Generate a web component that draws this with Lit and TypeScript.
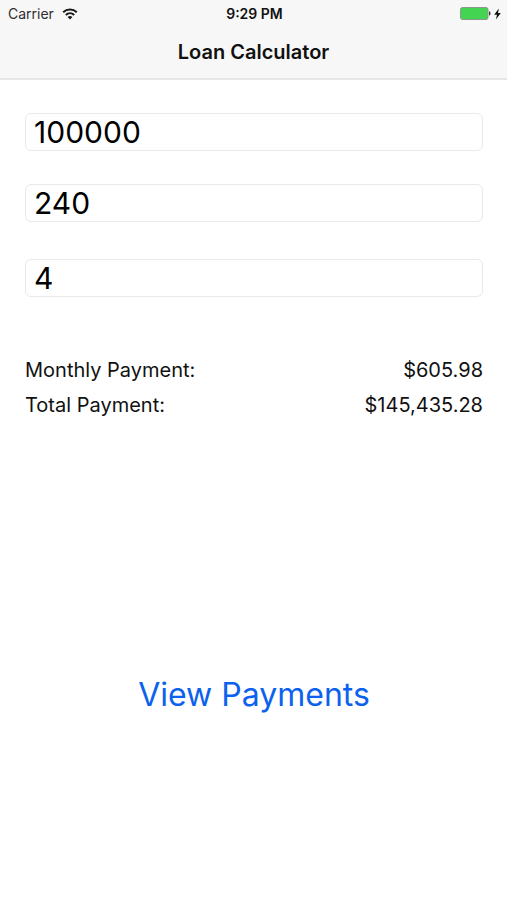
import { LitElement, html, css } from "lit";
import { customElement, state } from "lit/decorators.js";

const money = new Intl.NumberFormat("en-US", { style: "currency", currency: "USD" });

@customElement("status-bar")
class StatusBar extends LitElement {
  static styles = css`
    :host {
      display: grid;
      grid-template-columns: 1fr auto 1fr;
      align-items: center;
      height: 27px;
      padding: 0 6px 0 8px;
      font-size: 14px;
      color: #2e2e2e;
    }
    .side {
      display: flex;
      align-items: center;
      gap: 8px;
    }
    .power {
      justify-content: flex-end;
      gap: 3px;
    }
    .time {
      font-weight: 600;
      color: #111;
    }
    svg {
      display: block;
    }
  `;

  render() {
    return html`
      <div class="side">
        <span>Carrier</span>
        <svg width="16" height="12" viewBox="0 0 16 12" fill="none" stroke="#1a1a1a" stroke-width="2" aria-label="Wi-Fi">
          <path d="M1.2 4.2C5 .6 11 .6 14.8 4.2" />
          <path d="M3.8 7C6.2 4.7 9.8 4.7 12.2 7" />
          <path d="M8 11.4 5.6 9C7 7.7 9 7.7 10.4 9Z" fill="#1a1a1a" stroke="none" />
        </svg>
      </div>
      <span class="time">9:29 PM</span>
      <div class="side power">
        <svg width="31" height="13" viewBox="0 0 31 13" aria-label="Battery full">
          <rect x=".5" y=".5" width="27.5" height="12" rx="2" fill="#43d551" stroke="#8a978b" />
          <path d="M29 4.3C31 4.8 31 8.2 29 8.7Z" fill="#333" />
        </svg>
        <svg width="7" height="12" viewBox="0 0 7 12" aria-label="Charging">
          <path d="M4.8.5.2 6.7H3L1.9 11.5 6.8 5H4Z" fill="#111" />
        </svg>
      </div>
    `;
  }
}

@customElement("app-root")
class AppRoot extends LitElement {
  static styles = css`
    :host {
      display: flex;
      flex-direction: column;
      min-height: 100vh;
      background: #fff;
      color: #111;
      font-family: Inter, "Liberation Sans", sans-serif;
    }
    * {
      box-sizing: border-box;
    }
    header {
      background: #f7f7f7;
      border-bottom: 2px solid #e6e6e6;
    }
    h1 {
      margin: 0;
      padding: 11px 0 12px;
      font-size: 20px;
      line-height: 28px;
      font-weight: 600;
      text-align: center;
    }
    main {
      display: flex;
      flex-direction: column;
      padding: 33px 24px 0 25px;
    }
    form {
      display: grid;
      gap: 33px;
    }
    input {
      display: block;
      width: 100%;
      height: 38px;
      padding: 0 8px;
      border: 1px solid #e9e9e9;
      border-radius: 6px;
      background: #fff;
      color: #000;
      font: inherit;
      font-size: 30px;
      outline: none;
    }
    .rate {
      margin-top: 4px;
    }
    dl {
      display: grid;
      gap: 7px;
      margin: 59px 0 0;
      font-size: 20px;
      line-height: 28px;
    }
    .row {
      display: flex;
      justify-content: space-between;
    }
    dd {
      margin: 0;
    }
    .view {
      align-self: center;
      margin-top: 255px;
      padding: 0;
      border: 0;
      background: none;
      color: #0c62ee;
      font: inherit;
      font-size: 32px;
      line-height: 42px;
      cursor: pointer;
    }
  `;

  @state() private amount = "100000";
  @state() private months = "240";
  @state() private rate = "4";

  private get monthly() {
    const principal = Number(this.amount);
    const count = Number(this.months);
    const r = Number(this.rate) / 1200;
    if (!count) return 0;
    return r ? (principal * r) / (1 - Math.pow(1 + r, -count)) : principal / count;
  }

  render() {
    const total = this.monthly * Number(this.months);
    return html`
      <header>
        <status-bar></status-bar>
        <h1>Loan Calculator</h1>
      </header>
      <main>
        <form>
          <input aria-label="Loan amount" inputmode="decimal" .value=${this.amount}
            @input=${(e: Event) => (this.amount = (e.target as HTMLInputElement).value)} />
          <input aria-label="Months" inputmode="numeric" .value=${this.months}
            @input=${(e: Event) => (this.months = (e.target as HTMLInputElement).value)} />
          <input class="rate" aria-label="Interest rate" inputmode="decimal" .value=${this.rate}
            @input=${(e: Event) => (this.rate = (e.target as HTMLInputElement).value)} />
        </form>
        <dl>
          <div class="row"><dt>Monthly Payment:</dt><dd>${money.format(this.monthly)}</dd></div>
          <div class="row"><dt>Total Payment:</dt><dd>${money.format(total)}</dd></div>
        </dl>
        <button class="view" type="button">View Payments</button>
      </main>
    `;
  }
}
